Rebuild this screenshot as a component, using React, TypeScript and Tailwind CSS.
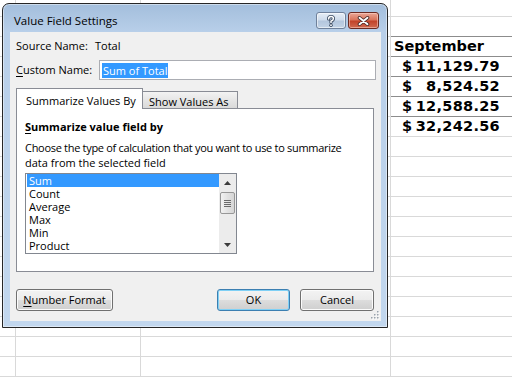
import React from "react";

const colWidths = ["w-[16px]", "w-[125px]", "w-[250px]", "w-[121px]"];

const septRows: Record<number, { label?: string; amount?: string; dark?: boolean }> = {
  1: { dark: true },
  2: { label: "September", dark: true },
  3: { amount: "11,129.79", dark: true },
  4: { amount: "8,524.52", dark: true },
  5: { amount: "12,588.25", dark: true },
  6: { amount: "32,242.56" },
};

function Sheet() {
  const rows = Array.from({ length: 19 }, (_, i) => i);
  return (
    <div className="flex flex-col">
      {rows.map((r) => {
        const sept = septRows[r];
        return (
          <div key={r} className={`flex ${r === 0 ? "h-[17px]" : "h-[20px]"} shrink-0`}>
            {colWidths.slice(0, 3).map((w, c) => (
              <div key={c} className={`${w} shrink-0 border-r border-b border-[#d9d9d9]`} />
            ))}
            <div
              className={`w-[121px] shrink-0 border-b ${
                sept?.dark ? "border-[#8c8c8c]" : "border-[#d9d9d9]"
              } flex items-center font-['DejaVu_Sans',sans-serif] text-[14.5px] font-bold text-black`}
            >
              {sept?.label && <span className="pl-[3px]">{sept.label}</span>}
              {sept?.amount && (
                <div className="flex w-full justify-between pl-[11px] pr-[12px] tracking-[0.3px]">
                  <span>$</span>
                  <span>{sept.amount}</span>
                </div>
              )}
            </div>
          </div>
        );
      })}
    </div>
  );
}

function HelpButton() {
  return (
    <div className="flex h-[17px] w-[30px] items-center justify-center rounded-[3px] border border-[#6f819b] bg-[linear-gradient(180deg,#e6edf6_0%,#cfdcec_45%,#b4c7de_55%,#c3d3e6_100%)] shadow-[inset_0_0_0_1px_rgba(255,255,255,0.55)]">
      <svg width="10" height="12" viewBox="0 0 10 12">
        <path d="M2.6 4 Q2.6 1.6 5 1.6 Q7.4 1.6 7.4 3.7 Q7.4 5.2 5 6.2 L5 7.6" fill="none" stroke="#3b4b62" strokeWidth="3.2" strokeLinecap="round" />
        <circle cx="5" cy="10.2" r="1.7" fill="#3b4b62" />
        <path d="M2.6 4 Q2.6 1.6 5 1.6 Q7.4 1.6 7.4 3.7 Q7.4 5.2 5 6.2 L5 7.6" fill="none" stroke="#ffffff" strokeWidth="1.5" strokeLinecap="round" />
        <circle cx="5" cy="10.2" r="0.9" fill="#ffffff" />
      </svg>
    </div>
  );
}

function CloseButton() {
  return (
    <div className="ml-[2px] flex h-[17px] w-[31px] items-center justify-center rounded-[3px] border border-[#6b2a22] bg-[linear-gradient(180deg,#eaa796_0%,#d9745c_45%,#c2432a_55%,#d06a50_100%)] shadow-[inset_0_0_0_1px_rgba(255,220,210,0.5)]">
      <svg width="13" height="10" viewBox="0 0 13 10">
        <path d="M2.5 1.8 L10.5 8.2 M10.5 1.8 L2.5 8.2" stroke="#4a2a28" strokeWidth="3.6" strokeLinecap="round" />
        <path d="M2.5 1.8 L10.5 8.2 M10.5 1.8 L2.5 8.2" stroke="#ffffff" strokeWidth="1.9" strokeLinecap="round" />
      </svg>
    </div>
  );
}

function Button({ children, def = false, width }: { children: React.ReactNode; def?: boolean; width: string }) {
  return (
    <div
      className={`${width} flex h-[22px] shrink-0 items-center justify-center rounded-[3px] border bg-[linear-gradient(180deg,#f3f3f3_0%,#ebebeb_50%,#dddddd_50%,#cfcfcf_100%)] ${
        def
          ? "border-[#3c7fb1] shadow-[inset_0_0_0_1px_#7fd0f5]"
          : "border-[#707070] shadow-[inset_0_0_0_1px_#fbfbfb]"
      }`}
    >
      {children}
    </div>
  );
}

function ScrollBar() {
  return (
    <div className="flex w-[17px] shrink-0 flex-col bg-[#ececec]">
      <div className="flex h-[17px] items-center justify-center">
        <svg width="7" height="4" viewBox="0 0 7 4">
          <path d="M0 4 L3.5 0 L7 4 Z" fill="#3c3c3c" />
        </svg>
      </div>
      <div className="ml-px mt-px flex h-[22px] w-[15px] flex-col items-center justify-center gap-[1px] rounded-[2px] border border-[#979797] bg-[linear-gradient(90deg,#f2f2f2,#e2e2e2_50%,#d6d6d6)]">
        <div className="h-px w-[7px] bg-[#6a6a6a]" />
        <div className="h-px w-[7px] bg-[#6a6a6a]" />
        <div className="h-px w-[7px] bg-[#6a6a6a]" />
        <div className="h-px w-[7px] bg-[#6a6a6a]" />
      </div>
      <div className="flex-1" />
      <div className="flex h-[17px] items-center justify-center">
        <svg width="7" height="4" viewBox="0 0 7 4">
          <path d="M0 0 L7 0 L3.5 4 Z" fill="#3c3c3c" />
        </svg>
      </div>
    </div>
  );
}

function Dialog() {
  const items = ["Sum", "Count", "Average", "Max", "Min", "Product"];
  return (
    <div className="absolute left-[2px] top-[3px] flex h-[325px] w-[386px] flex-col rounded-t-[7px] border border-[#262626] bg-[linear-gradient(180deg,#a3bedc_0px,#b8cfe9_28px,#c2d7ee_100%)] pb-[6px] pl-[7px] pr-[6px] shadow-[inset_0_0_0_1px_rgba(255,255,255,0.45)] font-['Open_Sans',sans-serif] text-[11px] text-black">
      {/* Title bar */}
      <div className="flex h-[28px] shrink-0 items-start pl-[4px] pr-[2px] pt-[8px]">
        <div className="flex h-[17px] w-full items-center">
          <span className="text-[11.5px]">Value Field Settings</span>
          <div className="ml-auto flex">
            <HelpButton />
            <CloseButton />
          </div>
        </div>
      </div>

      {/* Client */}
      <div className="relative flex h-[289px] flex-col bg-[#f0f0f0] px-[6px]">
        <div className="mt-[4px] flex h-[20px] items-center">
          <span className="w-[79px] shrink-0">Source Name:</span>
          <span>Total</span>
        </div>
        <div className="mt-[4px] flex h-[20px] items-center">
          <span className="w-[83px] shrink-0">
            <span className="underline underline-offset-2">C</span>ustom Name:
          </span>
          <div className="flex h-[20px] w-[277px] shrink-0 items-center border border-[#abadb3] bg-white pl-[2px]">
            <span className="bg-[#3399ff] px-[1px] leading-[15px] text-white">Sum of Total</span>
          </div>
        </div>

        {/* Tabs */}
        <div className="mt-[8px] flex h-[20px] items-end">
          <div className="relative z-10 -mb-px h-[21px] w-[127px] shrink-0 border border-b-0 border-[#898c95] bg-white pl-[9px] pt-[4px] leading-[15px]">
            Summarize Values By
          </div>
          <div className="-ml-px h-[17px] w-[96px] shrink-0 border border-b-0 border-[#898c95] bg-[linear-gradient(180deg,#f3f3f3,#e3e3e3_60%,#d9d9d9)] pl-[6px] pt-[2px] leading-[15px]">
            Show Values As
          </div>
        </div>
        <div className="flex h-[164px] w-[358px] shrink-0 flex-col border border-[#898c95] bg-white pl-[8px] pt-[10px]">
          <div className="font-bold leading-[15px]">
            <span className="underline underline-offset-2">S</span>ummarize value field by
          </div>
          <div className="mt-[6px] leading-[15px]">
            <div className="tracking-[-0.3px]">Choose the type of calculation that you want to use to summarize</div>
            <div>data from the selected field</div>
          </div>
          <div className="mt-[3px] flex h-[81px] w-[212px] border border-[#828790] bg-white">
            <div className="flex flex-1 flex-col pl-px">
              {items.map((it, i) => (
                <div
                  key={it}
                  className={`h-[13px] pl-[2px] leading-[13px] ${i === 0 ? "bg-[#3399ff] text-white" : ""}`}
                >
                  {it}
                </div>
              ))}
            </div>
            <ScrollBar />
          </div>
        </div>

        {/* Buttons */}
        <div className="mr-[1px] mt-[17px] flex">
          <Button width="w-[97px]">
            <span>
              <span className="underline underline-offset-2">N</span>umber Format
            </span>
          </Button>
          <div className="ml-auto">
            <Button width="w-[73px]" def>
              OK
            </Button>
          </div>
          <div className="ml-[10px]">
            <Button width="w-[74px]">Cancel</Button>
          </div>
        </div>

        {/* resize grip */}
        <svg className="absolute bottom-[1px] right-[1px]" width="10" height="10" viewBox="0 0 10 10">
          {[
            [8, 2],
            [8, 5],
            [5, 5],
            [8, 8],
            [5, 8],
            [2, 8],
          ].map(([x, y], i) => (
            <g key={i}>
              <rect x={x} y={y} width="1.5" height="1.5" fill="#ffffff" />
              <rect x={x - 1} y={y - 1} width="1.5" height="1.5" fill="#9aa3ad" />
            </g>
          ))}
        </svg>
      </div>
    </div>
  );
}

export default function App() {
  return (
    <div className="relative h-[378px] w-[512px] overflow-hidden bg-white">
      <Sheet />
      <Dialog />
    </div>
  );
}
